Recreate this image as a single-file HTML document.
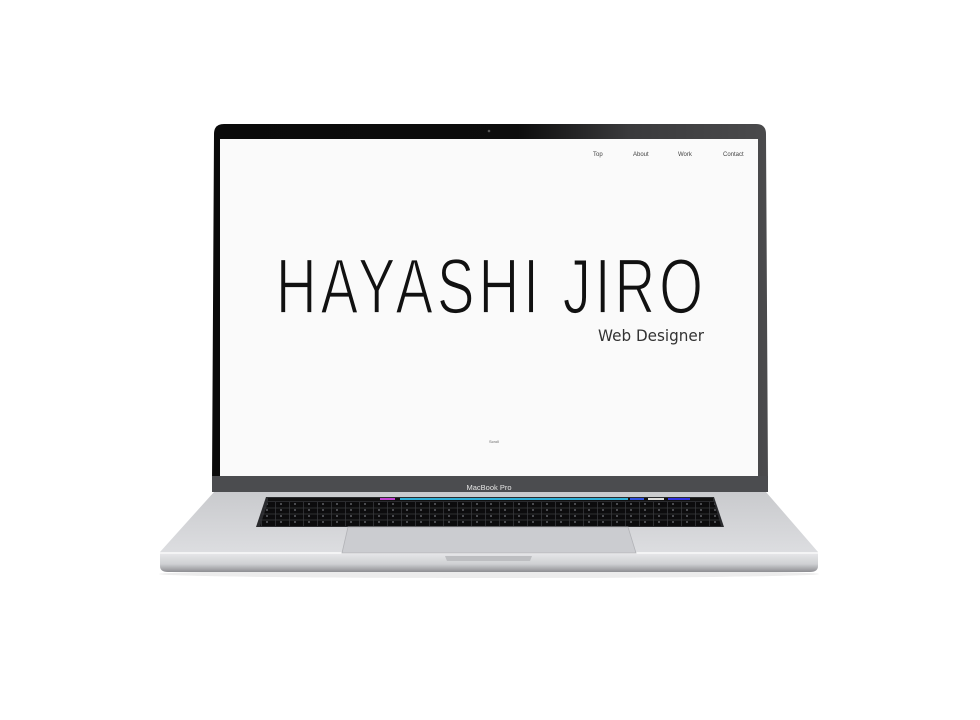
<!DOCTYPE html>
<html><head><meta charset="utf-8"><style>
html,body{margin:0;padding:0;background:#fff;width:980px;height:720px;overflow:hidden;font-family:"Liberation Sans",sans-serif}
.abs{position:absolute}
</style></head><body>
<svg class="abs" style="left:0;top:0" width="980" height="720" viewBox="0 0 980 720">
<defs>
<linearGradient id="bez" x1="0" x2="1" y1="0" y2="0">
<stop offset="0" stop-color="#0a0a0a"/><stop offset="0.55" stop-color="#0d0d0d"/><stop offset="0.75" stop-color="#3a3a3c"/><stop offset="1" stop-color="#4a4a4c"/>
</linearGradient>
<linearGradient id="deck" x1="0" x2="0" y1="0" y2="1">
<stop offset="0" stop-color="#c9cacd"/><stop offset="1" stop-color="#dcdde0"/>
</linearGradient>
<linearGradient id="lip" x1="0" x2="0" y1="0" y2="1">
<stop offset="0" stop-color="#e9eaec"/><stop offset="0.6" stop-color="#cfd0d3"/><stop offset="1" stop-color="#8d8e92"/>
</linearGradient>
<pattern id="keys" x="262" y="502" width="14" height="6" patternUnits="userSpaceOnUse">
<rect width="14" height="6" fill="#0c0c0d"/>
<rect x="4" y="1" width="2" height="2" fill="#4a4b4f"/>
<rect x="13" y="0" width="1" height="6" fill="#2e2f32"/>
</pattern>
</defs>
<ellipse cx="489" cy="574" rx="330" ry="4" fill="#ececec"/>
<path d="M214 492 L766 492 L818 552 L160 552 Z" fill="url(#deck)"/>
<path d="M160 552 L818 552 L818 566 Q818 572 810 572 L168 572 Q160 572 160 566 Z" fill="url(#lip)"/>
<rect x="160" y="552" width="658" height="2" fill="#f4f4f5"/>
<path d="M445 556 L532 556 L530 561 L447 561 Z" fill="#bdbec1"/>
<path d="M266 497 L714 497 L724 527 L256 527 Z" fill="#2a2b2e"/>
<path d="M348 527 L628 527 L636 553 L342 553 Z" fill="#cbccd0" stroke="#b2b3b7" stroke-width="0.8"/>
<path d="M224 124 L756 124 Q766 124 766 134 L768 482 Q768 492 758 492 L222 492 Q212 492 212 482 L214 134 Q214 124 224 124 Z" fill="url(#bez)"/>
<rect x="212" y="476" width="556" height="16" fill="#4b4c4f"/>
<rect x="220" y="139" width="538" height="337" fill="#fafafa"/>
<circle cx="489" cy="131" r="1.3" fill="#555"/>
<text x="489" y="490" text-anchor="middle" font-size="7.5" fill="#e5e5e5" font-family="Liberation Sans">MacBook Pro</text>
<rect x="268" y="498" width="445" height="3" fill="#111"/>
<rect x="380" y="498" width="15" height="2" fill="#c040d0"/>
<rect x="400" y="498" width="228" height="2" fill="#30b0d8"/>
<rect x="630" y="498" width="14" height="2" fill="#3050e0"/>
<rect x="648" y="498" width="16" height="2" fill="#ddd"/>
<rect x="668" y="498" width="22" height="2" fill="#3030e0"/>
<path d="M268 502 L714 502 L721 526 L260 526 Z" fill="url(#keys)"/>
<g stroke="#3a3b3e" stroke-width="0.7">
<path d="M264 508 H716 M262 514 H718 M260 520 H720"/>
</g>
<g font-family="Liberation Sans" font-size="6" fill="#444">
<text x="593" y="156">Top</text>
<text x="633" y="156">About</text>
<text x="678" y="156">Work</text>
<text x="723" y="156">Contact</text>
</g>
<g transform="translate(276,0) scale(0.72,1)">
<text x="0" y="313" font-family="Liberation Sans" font-size="78" fill="#111" stroke="#fafafa" stroke-width="1.8" textLength="593" lengthAdjust="spacing">HAYASHI JIRO</text>
</g>
<text x="598" y="341" font-family="DejaVu Sans" font-size="16" fill="#333" textLength="106" lengthAdjust="spacingAndGlyphs">Web Designer</text>
<text x="489" y="443" font-family="Liberation Sans" font-size="4" fill="#666">Scroll</text>
</svg>
</body></html>
